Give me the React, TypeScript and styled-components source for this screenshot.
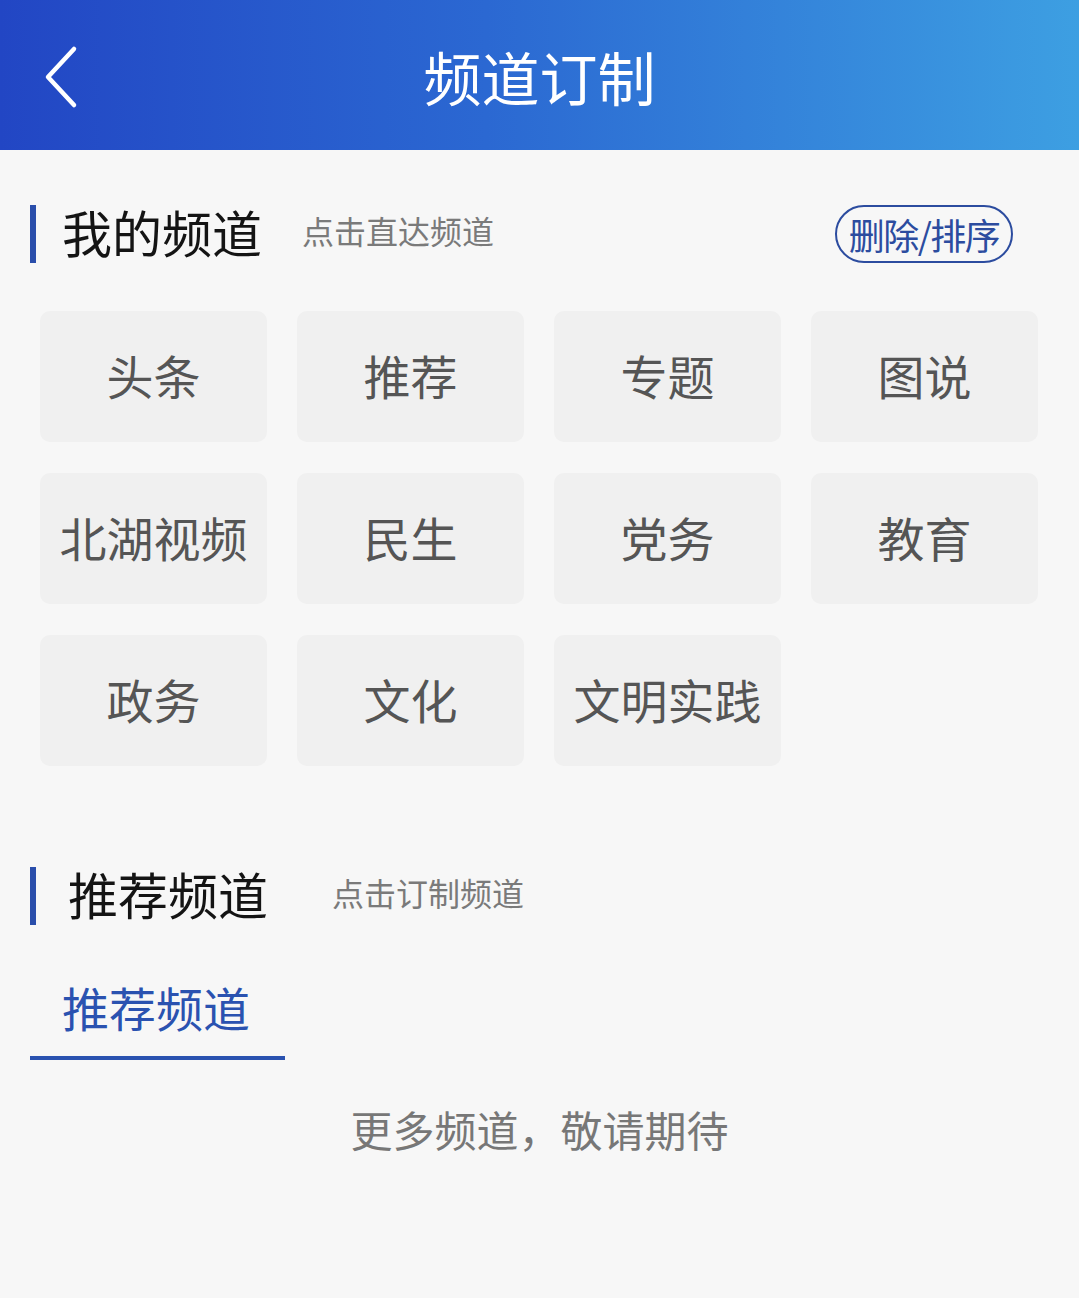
import React from 'react';
import styled, {createGlobalStyle} from "styled-components";

const GlobalStyle = createGlobalStyle`
  body {
    margin: 0;
    background: #f7f7f7;
    font-family: "Noto Sans CJK SC", "Noto Sans", sans-serif;
  }
`

const myChannels = ['头条', '推荐', '专题', '图说', '北湖视频', '民生', '党务', '教育', '政务', '文化', '文明实践']

export default function App() {
    return (
        <Page>
            <GlobalStyle/>
            <Header>
                <BackButton aria-label="返回">
                    <svg width="40" height="64" viewBox="0 0 40 64">
                        <path d="M32 4 L6 32 L32 60" fill="none" stroke="#fff" strokeWidth="4.5"
                              strokeLinecap="round" strokeLinejoin="round"/>
                    </svg>
                </BackButton>
                <HeaderTitle>频道订制</HeaderTitle>
                <span></span>
            </Header>

            <SectionHead top={55}>
                <Bar/>
                <SectionTitle offset={26}>我的频道</SectionTitle>
                <SectionHint offset={40}>点击直达频道</SectionHint>
                <EditButton>删除/排序</EditButton>
            </SectionHead>

            <ChannelGrid>
                {myChannels.map((item, index) => <Tile key={index}>{item}</Tile>)}
            </ChannelGrid>

            <SectionHead top={101}>
                <Bar/>
                <SectionTitle offset={32}>推荐频道</SectionTitle>
                <SectionHint offset={64}>点击订制频道</SectionHint>
            </SectionHead>

            <Tabs>
                <Tab active>推荐频道</Tab>
            </Tabs>

            <Empty>更多频道，敬请期待</Empty>
        </Page>
    );
}

const Page = styled.div`
  min-height: 1298px;
  background: #f7f7f7;
`
const Header = styled.header`
  height: 150px;
  display: grid;
  grid-template-columns: 1fr auto 1fr;
  align-items: center;
  background: linear-gradient(90deg, #2246c4 0%, #2b68d2 45%, #3d9fe2 100%);
`
const BackButton = styled.button`
  justify-self: start;
  margin-left: 42px;
  margin-top: 4px;
  padding: 0;
  border: none;
  background: none;
  display: flex;
`
const HeaderTitle = styled.h1`
  margin: 0;
  font-size: 58px;
  font-weight: 400;
  color: #fff;
  line-height: 1;
  padding-top: 2px;
`
const SectionHead = styled.div<{top: number}>`
  display: flex;
  align-items: center;
  margin-top: ${props => props.top}px;
  padding-left: 30px;
  padding-right: 66px;
  height: 58px;
`
const Bar = styled.span`
  width: 6px;
  height: 58px;
  background: #2a4eab;
`
const SectionTitle = styled.h2<{offset: number}>`
  margin: -6px 0 0 ${props => props.offset}px;
  font-size: 50px;
  font-weight: 400;
  color: #141414;
  line-height: 1;
`
const SectionHint = styled.span<{offset: number}>`
  margin-left: ${props => props.offset}px;
  margin-top: -8px;
  font-size: 32px;
  color: #7a7a7a;
`
const EditButton = styled.button`
  margin-left: auto;
  width: 178px;
  height: 58px;
  padding: 0;
  border: 2px solid #2c4c9f;
  border-radius: 29px;
  background: transparent;
  color: #2c4c9f;
  font-family: inherit;
  font-size: 36px;
  line-height: 1;
  letter-spacing: -1.5px;
`
const ChannelGrid = styled.div`
  display: grid;
  grid-template-columns: repeat(4, 227px);
  grid-auto-rows: 131px;
  column-gap: 30px;
  row-gap: 31px;
  margin: 48px 0 0 40px;
`
const Tile = styled.div`
  display: flex;
  align-items: center;
  justify-content: center;
  background: #f0f0f0;
  border-radius: 10px;
  font-size: 47px;
  color: #555;
  padding-bottom: 4px;
  box-sizing: border-box;
`
const Tabs = styled.div`
  display: flex;
  margin: 49px 0 0 30px;
`
const Tab = styled.div<{active?: boolean}>`
  width: 255px;
  box-sizing: border-box;
  padding: 0 0 16px 32px;
  font-size: 47px;
  line-height: 66px;
  color: ${props => props.active ? '#2a52b0' : '#555'};
  border-bottom: 4px solid ${props => props.active ? '#2a52b0' : 'transparent'};
`
const Empty = styled.p`
  margin: 39px 0 0;
  text-align: center;
  font-size: 42px;
  line-height: 60px;
  color: #777;
`
